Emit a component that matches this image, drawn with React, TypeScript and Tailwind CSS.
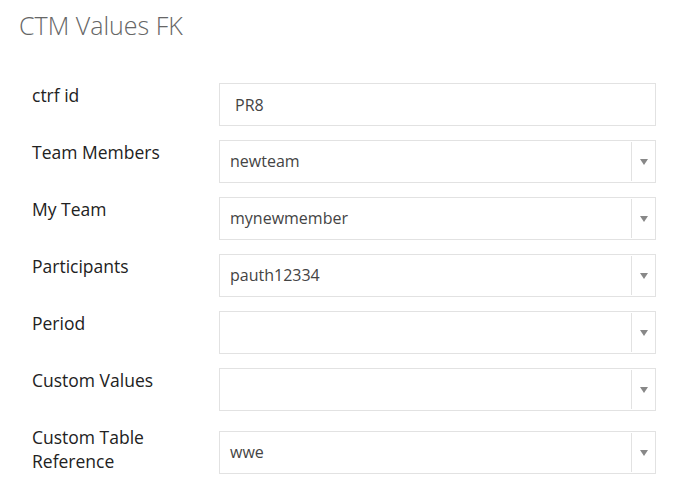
import React from 'react';

type Field = {
  label: string;
  value: string;
  kind: 'text' | 'select';
};

const fields: Field[] = [
  { label: 'ctrf id', value: 'PR8', kind: 'text' },
  { label: 'Team Members', value: 'newteam', kind: 'select' },
  { label: 'My Team', value: 'mynewmember', kind: 'select' },
  { label: 'Participants', value: 'pauth12334', kind: 'select' },
  { label: 'Period', value: '', kind: 'select' },
  { label: 'Custom Values', value: '', kind: 'select' },
  { label: 'Custom Table Reference', value: 'wwe', kind: 'select' },
];

function SelectBox({ value }: { value: string }) {
  return (
    <div className="flex h-[43px] w-full border border-[#e2e2e2] bg-white">
      <div className="flex flex-1 items-center pb-px pl-[10px] text-[16px] text-[#444]">{value}</div>
      <div className="my-px w-px bg-[#e2e2e2]" />
      <div className="flex w-[23px] items-center justify-center">
        <svg width="8" height="6" viewBox="0 0 8 6">
          <path d="M0 0 L8 0 L4 6 Z" fill="#888" />
        </svg>
      </div>
    </div>
  );
}

function TextBox({ value }: { value: string }) {
  return (
    <div className="flex h-[43px] w-full items-center border border-[#e2e2e2] bg-white pl-[15px] text-[16px] text-[#444]">
      {value}
    </div>
  );
}

export default function App() {
  return (
    <div
      className="min-h-screen bg-white pl-[19px] pr-[36px] pt-[8px]"
      style={{ fontFamily: '"Open Sans", "Liberation Sans", sans-serif' }}
    >
      <h1 className="text-[25px] font-light leading-[34px] text-[#666]">CTM Values FK</h1>

      <div className="mt-[41px] flex flex-col gap-[14px] pl-[13px]">
        {fields.map((f) => (
          <div key={f.label} className="flex">
            <div className="w-[187px] shrink-0 self-start pb-px pr-6 text-[17.5px] leading-[24px] text-[#222]">
              {f.label}
            </div>
            <div className="flex-1 self-end">
              {f.kind === 'text' ? <TextBox value={f.value} /> : <SelectBox value={f.value} />}
            </div>
          </div>
        ))}
      </div>
    </div>
  );
}
